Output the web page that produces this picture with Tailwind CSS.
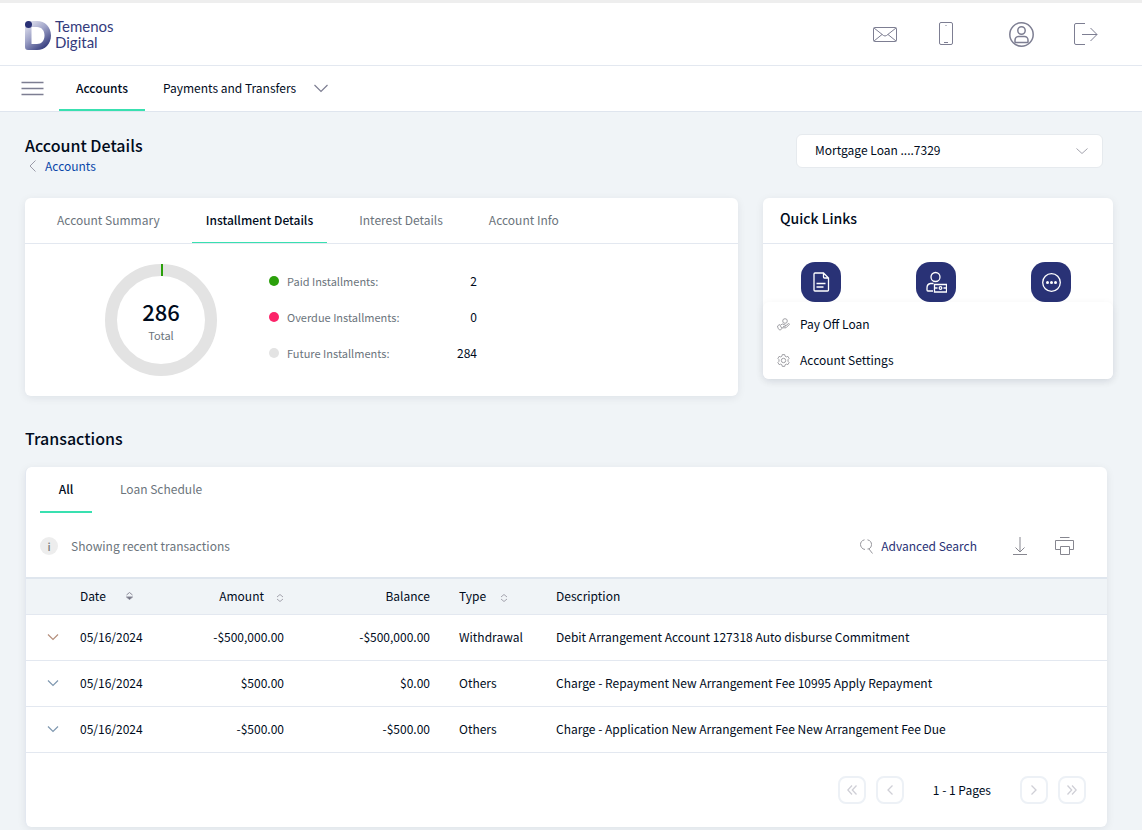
<!DOCTYPE html>
<html lang="en">
<head>
    <meta charset="UTF-8">
    <meta name="viewport" content="width=device-width, initial-scale=1.0">
    <title>Temenos Digital - Account Details</title>
    <script src="https://cdn.jsdelivr.net/npm/@tailwindcss/browser@4"></script>
</head>
<body class="min-h-screen bg-[#f0f4f7] font-['Noto_Sans_CJK_SC','Noto_Sans',sans-serif] text-[12px] leading-5 text-[#000b1c]">

    <!-- Header -->
    <header class="bg-white border-t-3 border-[#eeeeee]">
        <div class="h-[63px] pl-6 pr-11 flex items-center justify-between border-b border-[#e3e8f0]">
            <a href="#" class="flex items-center gap-1 text-[#343b7c]">
                <svg class="w-[27px] h-[33px]" viewBox="0 -2 27 33">
                    <defs>
                        <linearGradient id="logo-fill" x1="0.1" y1="0" x2="0.8" y2="1">
                            <stop offset="0" stop-color="#e6e7f1"/>
                            <stop offset="0.45" stop-color="#9fa3c8"/>
                            <stop offset="1" stop-color="#283075"/>
                        </linearGradient>
                    </defs>
                    <path fill="url(#logo-fill)" fill-rule="evenodd" d="M4 1H13C21 1 27 7 27 15.500C27 24 21 30 13 30H4Q1 30 1 27V4Q1 1 4 1ZM7.500 7V24H13C17.500 24 20.500 20.500 20.500 15.500C20.500 10.500 17.500 7 13 7Z"/>
                    <circle cx="4.500" cy="4.500" r="3.500" fill="#283075"/>
                </svg>
                <span class="flex flex-col font-['Lato',sans-serif] text-[15px] leading-4"><span>Temenos</span><span>Digital</span></span>
            </a>
            <div class="flex items-center gap-10 text-[#7d7e92]">
                <button type="button" aria-label="Messages">
                    <svg class="w-6 h-6" viewBox="0 0 24 24" fill="none" stroke="currentColor"><rect x="0.500" y="5.500" width="23" height="14" rx="1"/><path d="M1 6l9.500 7.500q1.500 1 3 0L23 6M1 19l8-6.500M23 19l-8-6.500"/></svg>
                </button>
                <button type="button" aria-label="Mobile" class="mr-3.5">
                    <svg class="w-[18px] h-6" viewBox="0 0 18 24" fill="none" stroke="currentColor"><rect x="2.500" y="0.500" width="13" height="22" rx="1.500"/><path d="M7 20.500h4M8.500 3.500h1"/></svg>
                </button>
                <button type="button" aria-label="Profile">
                    <svg class="w-[25px] h-[25px]" viewBox="0 0 25 25" fill="none" stroke="currentColor" stroke-width="1.500"><circle cx="12.500" cy="12.500" r="11.700"/><circle cx="12.500" cy="8.500" r="3.700"/><path d="M6 20v-2a3.500 3.500 0 0 1 3.500-3.500h6a3.500 3.500 0 0 1 3.500 3.500v2q0 .5-.5.5h-12q-.5 0-.5-.5Z"/></svg>
                </button>
                <button type="button" aria-label="Sign out">
                    <svg class="w-6 h-6" viewBox="0 0 24 24" fill="none" stroke="currentColor"><path d="M11 1.500H2Q.5 1.500.5 3v18q0 1.500 1.500 1.500h9M8 12.500h15M16.500 6l6.500 6.500-6.500 6.500"/></svg>
                </button>
            </div>
        </div>
        <nav class="h-[46px] pl-[21px] flex items-stretch border-b border-[#dfe5ee]">
            <button type="button" aria-label="Menu" class="mr-[15px]">
                <svg class="w-[23px] h-4" viewBox="0 0 23 16" stroke="#7d7e92" stroke-width="1.500"><path d="M.5 1.500h22M.5 7.500h22M.5 13.500h22"/></svg>
            </button>
            <a href="#" class="px-[17px] pt-3 border-b-2 border-[#39e0b0] font-medium">Accounts</a>
            <a href="#" class="ml-[18px] pt-3 flex gap-[18px]">Payments and Transfers
                <svg class="w-[14px] h-5" viewBox="0 0 14 20" fill="none" stroke="#7d7e92" stroke-width="1.200"><path d="M.5 7l6.500 6.500L13.500 7"/></svg>
            </a>
        </nav>
    </header>

    <main class="pl-[25px] pr-[29px]">
        <!-- Page title -->
        <div class="pt-[22px] pr-[10px] flex justify-between">
            <div>
                <h1 class="text-[16px] leading-[22px] font-medium">Account Details</h1>
                <a href="#" class="pl-1 flex items-center gap-[9px] text-[#0a47a9]">
                    <svg class="w-[7px] h-3" viewBox="0 0 7 12" fill="none" stroke="#9a9aa8"><path d="M6.500.5L1 6l5.500 5.500"/></svg>
                    Accounts
                </a>
            </div>
            <div class="relative w-[307px]">
                <select aria-label="Account" class="w-full h-[34px] pl-[18px] pb-0.5 appearance-none rounded-md border border-[#e6eaee] bg-white">
                    <option>Mortgage Loan ....7329</option>
                </select>
                <svg class="absolute right-[15px] top-[14px] w-3 h-[7px] pointer-events-none" viewBox="0 0 12 7" fill="none" stroke="#a3a3ad"><path d="M.5.5L6 5.500 11.500.5"/></svg>
            </div>
        </div>

        <div class="mt-[22px] flex items-start gap-[25px]">
            <!-- Installments -->
            <section class="flex-1 rounded-md bg-white shadow-[0_2px_8px_rgba(0,20,50,0.08)]">
                <div class="h-[46px] pl-[18px] flex gap-[18px] border-b border-[#e3e8f0] text-[#6b747c]">
                    <button type="button" class="px-3.5 border-b border-transparent">Account Summary</button>
                    <button type="button" class="px-3.5 border-b border-[#39e0b0] font-medium text-[#000b1c]">Installment Details</button>
                    <button type="button" class="px-3.5 border-b border-transparent">Interest Details</button>
                    <button type="button" class="px-3.5 border-b border-transparent">Account Info</button>
                </div>
                <div class="py-5 pl-20 flex items-start gap-[52px]">
                    <div class="relative w-28 h-28">
                        <svg class="w-28 h-28" viewBox="0 0 112 112"><circle cx="56" cy="56" r="50" fill="none" stroke="#e3e3e3" stroke-width="12"/><path d="M57 0v12" stroke="#2ba00b" stroke-width="2"/></svg>
                        <div class="absolute inset-0 pt-[33px] text-center">
                            <div class="text-[22px] leading-7 font-medium">286</div>
                            <div class="mt-0.5 text-[11px] leading-4 text-[#6b747c]">Total</div>
                        </div>
                    </div>
                    <dl class="w-[208px] pt-[7px] flex flex-col gap-4">
                        <div class="flex items-center">
                            <span class="w-[10px] h-[10px] mr-2 rounded-full bg-[#2ba00b]"></span>
                            <dt class="flex-1 text-[11px] text-[#6b747c]">Paid Installments:</dt>
                            <dd>2</dd>
                        </div>
                        <div class="flex items-center">
                            <span class="w-[10px] h-[10px] mr-2 rounded-full bg-[#fc2369]"></span>
                            <dt class="flex-1 text-[11px] text-[#6b747c]">Overdue Installments:</dt>
                            <dd>0</dd>
                        </div>
                        <div class="flex items-center">
                            <span class="w-[10px] h-[10px] mr-2 rounded-full bg-[#e3e3e3]"></span>
                            <dt class="flex-1 text-[11px] text-[#6b747c]">Future Installments:</dt>
                            <dd>284</dd>
                        </div>
                    </dl>
                </div>
            </section>

            <!-- Quick links -->
            <section class="relative w-[350px] h-[181px] rounded-md bg-white shadow-[0_2px_8px_rgba(0,20,50,0.08)]">
                <h2 class="h-[46px] pl-[17px] pt-[10px] border-b border-[#e3e8f0] text-[14px] font-medium">Quick Links</h2>
                <div class="pt-[18px] pl-[38px] pr-[42px] flex justify-between text-white">
                    <button type="button" aria-label="Statements" class="w-10 h-10 rounded-[14px] bg-[#293276] flex items-center justify-center">
                        <svg class="w-5 h-5" viewBox="0 0 20 20" fill="none" stroke="currentColor" stroke-width="1.300"><path d="M12.500 1H4Q3 1 3 2v16q0 1 1 1h12.500q1 0 1-1V6ZM12.500 1v4q0 1 1 1h4M5.500 11.500h9M5.500 15h7"/></svg>
                    </button>
                    <button type="button" aria-label="Account holders" class="w-10 h-10 rounded-[14px] bg-[#293276] flex items-center justify-center">
                        <svg class="w-[22px] h-[22px]" viewBox="0 0 22 22" fill="none" stroke="currentColor" stroke-width="1.300"><circle cx="10.500" cy="6" r="4.500"/><path d="M8 20H3Q2 20 2 19v-2q0-4 3.500-4.500H8.500M9.500 13.500h12v7.500h-12ZM9.500 17h3M18.500 17h3"/><circle cx="15.500" cy="17" r="1.300"/></svg>
                    </button>
                    <button type="button" aria-label="More" class="w-10 h-10 rounded-[14px] bg-[#293276] flex items-center justify-center">
                        <svg class="w-5 h-5" viewBox="0 0 20 20" fill="none" stroke="currentColor" stroke-width="1.300"><circle cx="10.500" cy="10.500" r="8.800"/><g fill="currentColor" stroke="none"><circle cx="6.500" cy="10.500" r="1.500"/><circle cx="10.500" cy="10.500" r="1.500"/><circle cx="14.500" cy="10.500" r="1.500"/></g></svg>
                    </button>
                </div>
                <div class="absolute inset-x-0 bottom-0 pt-1 pl-[14px] rounded-md bg-white shadow-[0_2px_8px_rgba(0,20,50,0.06)]">
                    <a href="#" class="h-9 flex items-center gap-[10px]">
                        <svg class="w-[13px] h-[13px]" viewBox="0 0 13 13" fill="none" stroke="#96969c" stroke-width="0.900"><circle cx="8" cy="3" r="2.300"/><path d="M.5 8l2-1.500 2.500 4L3 12.200Q.5 11 .5 8ZM3.500 7l2-1 3 1.200q.5 1-.7 1.200H6M8.500 8l3-2.500q1 0 .8 1L9 9.800H5"/></svg>
                        Pay Off Loan
                    </a>
                    <a href="#" class="h-9 mb-px flex items-center gap-[10px]">
                        <svg class="w-[13px] h-[13px]" viewBox="0 0 13 13" fill="none" stroke="#96969c" stroke-width="0.900"><circle cx="6.500" cy="6.500" r="2.200"/><path d="M5.300.6h2.400l.4 1.600 1.200.7 1.600-.5 1.200 2.100-1.100 1.200v1.600l1.100 1.200-1.200 2.100-1.600-.5-1.200.7-.4 1.600H5.300l-.4-1.600-1.200-.7-1.600.5L.9 8.500 2 7.300V5.700L.9 4.500l1.200-2.100 1.600.5 1.200-.7Z"/></svg>
                        Account Settings
                    </a>
                </div>
            </section>
        </div>

        <!-- Transactions -->
        <h2 class="mt-[30px] text-[16px] leading-6 font-medium">Transactions</h2>
        <section class="mt-[17px] mr-[6px] rounded-md bg-white border-l border-[#e3e8f0] shadow-[0_2px_8px_rgba(0,20,50,0.08)]">
            <div class="h-[46px] pl-[14px] flex text-[#6b747c]">
                <button type="button" class="w-[52px] border-b-2 border-[#39e0b0] font-medium text-[#000b1c]">All</button>
                <button type="button" class="px-7 border-b-2 border-transparent">Loan Schedule</button>
            </div>
            <div class="h-16 pt-0.5 pl-[14px] pr-[33px] flex items-center">
                <span class="w-[18px] h-[18px] mr-[13px] rounded-full bg-[#ededed] text-[11px] leading-[18px] text-center font-medium text-[#7b7b7b]">i</span>
                <p class="flex-1 text-[#6b747c]">Showing recent transactions</p>
                <a href="#" class="flex items-center gap-2 text-[#293276]">
                    <svg class="w-[13px] h-[15px]" viewBox="0 0 13 15" fill="none" stroke="#96969c"><path d="M4.500.8C1.500 1.500.5 3.500.5 5.500S2 10.200 5 10.500M7.500.8c3 .7 4 2.700 4 4.700 0 2-1 3.500-2.500 4.300l-1.500.2M9 10l3.500 4.500"/></svg>
                    Advanced Search
                </a>
                <button type="button" aria-label="Download" class="ml-9 mr-7">
                    <svg class="w-[14px] h-[18px]" viewBox="0 0 14 18" fill="none" stroke="#86868f"><path d="M7 0v14.500M2.500 10.500L7 15l4.500-4.500M0 17.500h14"/></svg>
                </button>
                <button type="button" aria-label="Print">
                    <svg class="w-[19px] h-[18px]" viewBox="0 0 19 18" fill="none" stroke="#86868f"><path d="M5 .5h9.500M5.500 12.500h-5v-9h18v9h-4M5.500 9.500h9v8h-9Z"/></svg>
                </button>
            </div>
            <table class="w-full table-fixed border-b border-[#e3e8f0]">
                <colgroup>
                    <col class="w-[54px]"><col class="w-[105px]"><col class="w-[99px]"><col class="w-[146px]"><col class="w-[126px]"><col>
                </colgroup>
                <thead class="bg-[#f0f4f7] text-left border-t-2 border-[#dfe6ee]">
                    <tr class="h-9 [&>th]:font-normal">
                        <th></th>
                        <th>
                            <button type="button" class="flex items-center gap-5">Date
                                <svg class="w-[7px] h-2" viewBox="0 0 7 8" stroke="#8b8b98" fill="none"><path d="M.5 3l3-2.500 3 2.500"/><path fill="#6d6e80" d="M.5 5h6l-3 2.500Z"/></svg>
                            </button>
                        </th>
                        <th>
                            <button type="button" class="ml-auto flex items-center gap-3">Amount
                                <svg class="w-2 h-2 mt-[3px]" viewBox="0 0 8 8" stroke="#a3a3ad" fill="none"><path d="M1 3l3-2.500L7 3M1 5l3 2.500L7 5"/></svg>
                            </button>
                        </th>
                        <th class="text-right">Balance</th>
                        <th class="pl-[29px]">
                            <button type="button" class="flex items-center gap-[14px]">Type
                                <svg class="w-2 h-2 mt-[3px]" viewBox="0 0 8 8" stroke="#a3a3ad" fill="none"><path d="M1 3l3-2.500L7 3M1 5l3 2.500L7 5"/></svg>
                            </button>
                        </th>
                        <th>Description</th>
                    </tr>
                </thead>
                <tbody>
                    <tr class="h-[46px] border-t border-[#e3e8f0]">
                        <td class="pl-[21px]"><button type="button" aria-label="Expand" class="block"><svg class="w-3 h-[7px]" viewBox="0 0 12 7" fill="none" stroke="#b58f7c" stroke-width="1.200"><path d="M1 .5l5 5 5-5"/></svg></button></td>
                        <td>05/16/2024</td>
                        <td class="text-right">-$500,000.00</td>
                        <td class="text-right">-$500,000.00</td>
                        <td class="pl-[29px]">Withdrawal</td>
                        <td>Debit Arrangement Account 127318 Auto disburse Commitment</td>
                    </tr>
                    <tr class="h-[46px] border-t border-[#e3e8f0]">
                        <td class="pl-[21px]"><button type="button" aria-label="Expand" class="block"><svg class="w-3 h-[7px]" viewBox="0 0 12 7" fill="none" stroke="#7f98b0" stroke-width="1.200"><path d="M1 .5l5 5 5-5"/></svg></button></td>
                        <td>05/16/2024</td>
                        <td class="text-right">$500.00</td>
                        <td class="text-right">$0.00</td>
                        <td class="pl-[29px]">Others</td>
                        <td>Charge - Repayment New Arrangement Fee 10995 Apply Repayment</td>
                    </tr>
                    <tr class="h-[46px] border-t border-[#e3e8f0]">
                        <td class="pl-[21px]"><button type="button" aria-label="Expand" class="block"><svg class="w-3 h-[7px]" viewBox="0 0 12 7" fill="none" stroke="#7f98b0" stroke-width="1.200"><path d="M1 .5l5 5 5-5"/></svg></button></td>
                        <td>05/16/2024</td>
                        <td class="text-right">-$500.00</td>
                        <td class="text-right">-$500.00</td>
                        <td class="pl-[29px]">Others</td>
                        <td>Charge - Application New Arrangement Fee New Arrangement Fee Due</td>
                    </tr>
                </tbody>
            </table>
            <div class="h-[74px] pr-[21px] flex items-center justify-end gap-[10px] text-[#cfcfd6]">
                <button type="button" aria-label="First page" class="w-7 h-7 rounded-lg border-2 border-[#edf1f6] flex items-center justify-center">
                    <svg class="w-[10px] h-[10px]" viewBox="0 0 10 10" fill="none" stroke="currentColor" stroke-width="1.300"><path d="M5 .5L.8 5 5 9.500M9.500.5L5.300 5l4.200 4.500"/></svg>
                </button>
                <button type="button" aria-label="Previous page" class="w-7 h-7 rounded-lg border-2 border-[#edf1f6] flex items-center justify-center">
                    <svg class="w-[10px] h-[10px]" viewBox="0 0 10 10" fill="none" stroke="currentColor" stroke-width="1.300"><path d="M7.500.5L3 5l4.500 4.500"/></svg>
                </button>
                <span class="px-[19px] text-[#000b1c]">1 - 1 Pages</span>
                <button type="button" aria-label="Next page" class="w-7 h-7 rounded-lg border-2 border-[#edf1f6] flex items-center justify-center">
                    <svg class="w-[10px] h-[10px]" viewBox="0 0 10 10" fill="none" stroke="currentColor" stroke-width="1.300"><path d="M2.500.5L7 5 2.500 9.500"/></svg>
                </button>
                <button type="button" aria-label="Last page" class="w-7 h-7 rounded-lg border-2 border-[#edf1f6] flex items-center justify-center">
                    <svg class="w-[10px] h-[10px]" viewBox="0 0 10 10" fill="none" stroke="currentColor" stroke-width="1.300"><path d="M.5.5L4.700 5 .5 9.500M5 .5L9.200 5 5 9.500"/></svg>
                </button>
            </div>
        </section>
    </main>
</body>
</html>
